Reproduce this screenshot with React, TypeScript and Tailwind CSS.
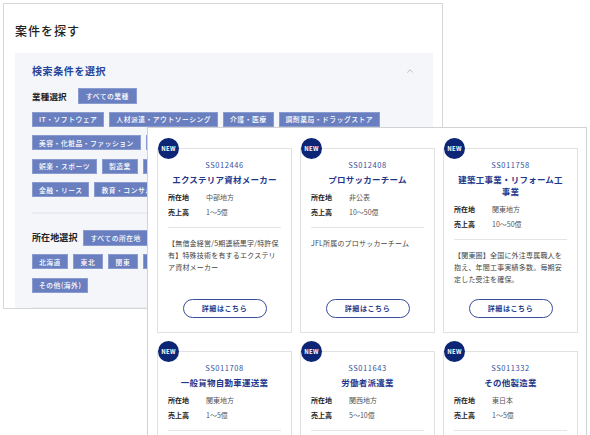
import { ChevronUp } from 'lucide-react';

const industryRows = [
  ['IT・ソフトウェア', '人材派遣・アウトソーシング', '介護・医療', '調剤薬局・ドラッグストア'],
  ['美容・化粧品・ファッション', '飲食・フード', '不動産・建設'],
  ['娯楽・スポーツ', '製造業', '卸売・小売', '運輸・物流'],
  ['金融・リース', '教育・コンサルティング', 'その他'],
];

const areaRows = [
  ['北海道', '東北', '関東', '中部', '近畿', '中国・四国'],
  ['その他(海外)'],
];

const cases = [
  {
    code: 'SS012446',
    title: 'エクステリア資材メーカー',
    area: '中部地方',
    sales: '1～5億',
    desc: '【無借金経営/5期連続黒字/特許保有】特殊技術を有するエクステリア資材メーカー',
  },
  {
    code: 'SS012408',
    title: 'プロサッカーチーム',
    area: '非公表',
    sales: '10～50億',
    desc: 'JFL所属のプロサッカーチーム',
  },
  {
    code: 'SS011758',
    title: '建築工事業・リフォーム工事業',
    area: '関東地方',
    sales: '10～50億',
    desc: '【関東圏】全国に外注専属職人を抱え、年間工事実績多数。毎期安定した受注を確保。',
  },
  {
    code: 'SS011708',
    title: '一般貨物自動車運送業',
    area: '関東地方',
    sales: '1～5億',
  },
  {
    code: 'SS011643',
    title: '労働者派遣業',
    area: '関西地方',
    sales: '5～10億',
  },
  {
    code: 'SS011332',
    title: 'その他製造業',
    area: '東日本',
    sales: '1～5億',
  },
];

type Case = { code: string; title: string; area: string; sales: string; desc?: string };

function Tag({ label }: { label: string }) {
  return (
    <span className="flex h-[15px] min-w-[30px] shrink-0 items-center justify-center whitespace-nowrap border border-[#8a9bd0] bg-[#6a7fbf] px-[6px] text-[6.8px] font-medium tracking-[0.5px] text-white">
      {label}
    </span>
  );
}

function CaseCard({ item }: { item: Case }) {
  return (
    <div className="relative flex flex-col border border-[#e1e1e1] bg-white px-[10px] pt-[10px] pb-[14px]">
      <span className="absolute -top-[11px] left-0 flex h-[21px] w-[21px] items-center justify-center rounded-full bg-[#0c2574] text-[6px] font-bold tracking-[0.2px] text-white">
        NEW
      </span>
      <p className="text-center text-[7.5px] leading-[11px] tracking-[0.6px] text-[#34509e]">{item.code}</p>
      <h3 className="mt-[3px] px-[1px] text-center text-[8.5px] font-bold leading-[12px] tracking-[0.25px] text-[#1f388c]">
        {item.title}
      </h3>
      <dl className="mt-[5px] text-[7px] leading-[15px]">
        <div className="flex">
          <dt className="w-[38px] font-bold text-[#222]">所在地</dt>
          <dd className="text-[#555]">{item.area}</dd>
        </div>
        <div className="flex">
          <dt className="w-[38px] font-bold text-[#222]">売上高</dt>
          <dd className="text-[#555]">{item.sales}</dd>
        </div>
      </dl>
      <div className="mt-[7px] h-px bg-[#e4e4e4]" />
      {item.desc && (
        <>
          <p className="mt-[9px] flex-1 text-[7px] leading-[12px] tracking-[0.2px] text-[#444]">{item.desc}</p>
          <button className="mx-auto mt-[14px] flex h-[19px] w-[84px] items-center justify-center rounded-full border-[1.5px] border-[#3a4c9c] text-[7px] font-bold tracking-[0.6px] text-[#26398a]">
            詳細はこちら
          </button>
        </>
      )}
    </div>
  );
}

export default function App() {
  return (
    <div className="relative h-[435px] w-[590px] overflow-hidden bg-white font-['Noto_Sans_CJK_JP','Noto_Sans',sans-serif]">
      {/* 検索画面 */}
      <div className="absolute left-[3px] top-[3px] flex h-[306px] w-[440px] flex-col overflow-hidden border border-[#d6d6d6] bg-white">
        <h1 className="ml-[11px] mt-[19px] text-[12px] font-medium leading-[16px] tracking-[1px] text-[#222]">案件を探す</h1>
        <div className="ml-[11px] mt-[14px] w-[418px] flex-1 bg-[#f4f6fa] pl-[17px] pr-[18px] pt-[11px]">
          <div className="flex items-center justify-between">
            <h2 className="text-[10px] font-bold leading-[14px] tracking-[0.6px] text-[#26449a]">検索条件を選択</h2>
            <ChevronUp className="h-[10px] w-[10px] text-[#9a9a9a]" strokeWidth={1.5} />
          </div>

          <div className="mt-[10px] flex items-center">
            <span className="mr-[11px] text-[8.5px] font-bold tracking-[0.2px] text-[#222]">業種選択</span>
            <span className="flex h-[16px] items-center border border-[#8a9bd0] bg-[#6a7fbf] px-[7px] text-[6.8px] font-medium tracking-[0.5px] text-white">
              すべての業種
            </span>
          </div>
          <div className="mt-[8px] flex flex-col gap-[8.4px]">
            {industryRows.map((row, i) => (
              <div key={i} className="flex gap-[5px]">
                {row.map((t) => (
                  <Tag key={t} label={t} />
                ))}
              </div>
            ))}
          </div>

          <div className="mt-[15px] h-[2px] bg-[#e8ebf1]" />

          <div className="mt-[16px] flex items-center">
            <span className="mr-[5px] text-[9px] font-bold tracking-[0.1px] text-[#222]">所在地選択</span>
            <span className="flex h-[16px] items-center border border-[#8a9bd0] bg-[#6a7fbf] px-[7px] text-[6.8px] font-medium tracking-[0.5px] text-white">
              すべての所在地
            </span>
          </div>
          <div className="mt-[8px] flex flex-col gap-[8.4px]">
            {areaRows.map((row, i) => (
              <div key={i} className="flex gap-[5px]">
                {row.map((t) => (
                  <Tag key={t} label={t} />
                ))}
              </div>
            ))}
          </div>

          <div className="mt-[14px] h-[2px] bg-[#e8ebf1]" />
        </div>
      </div>

      {/* 案件一覧 */}
      <div className="absolute left-[147px] top-[127px] h-[310px] w-[440px] overflow-hidden border border-[#d2d2d2] bg-white px-[9px] pt-[20px]">
        <div className="grid grid-cols-[135px_135px_135px] gap-x-[8px] gap-y-[18px]">
          {cases.map((c) => (
            <CaseCard key={c.code} item={c} />
          ))}
        </div>
      </div>
    </div>
  );
}
